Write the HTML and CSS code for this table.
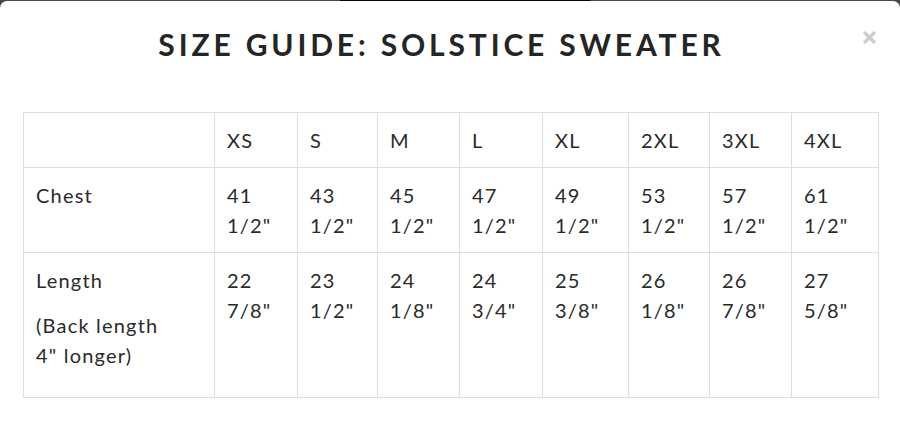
FILE: index.html
```html
<!DOCTYPE html>
<html>
<head>
<meta charset="utf-8">
<link rel="stylesheet" href="styles.css">
</head>
<body>
<div class="modal">
  <div class="modal-head">
    <h1 class="title">SIZE GUIDE: SOLSTICE SWEATER</h1>
    <button class="close" aria-label="Close">
      <svg width="15" height="15" viewBox="0 0 15 15"><path d="M2 2 L13 13 M13 2 L2 13" stroke="#cfcfcf" stroke-width="3.4" stroke-linecap="butt"/></svg>
    </button>
  </div>
  <table class="size-table">
    <colgroup>
      <col class="c-label"><col class="c-xs"><col class="c-s"><col class="c-m"><col class="c-l"><col class="c-xl"><col class="c-2xl"><col class="c-3xl"><col class="c-4xl">
    </colgroup>
    <tr>
      <td></td><td>XS</td><td>S</td><td>M</td><td>L</td><td>XL</td><td>2XL</td><td>3XL</td><td>4XL</td>
    </tr>
    <tr>
      <td>Chest</td>
      <td>41<br>1/2"</td><td>43<br>1/2"</td><td>45<br>1/2"</td><td>47<br>1/2"</td><td>49<br>1/2"</td><td>53<br>1/2"</td><td>57<br>1/2"</td><td>61<br>1/2"</td>
    </tr>
    <tr>
      <td><p class="para">Length</p><p class="para">(Back length<br>4" longer)</p></td>
      <td>22<br>7/8"</td><td>23<br>1/2"</td><td>24<br>1/8"</td><td>24<br>3/4"</td><td>25<br>3/8"</td><td>26<br>1/8"</td><td>26<br>7/8"</td><td>27<br>5/8"</td>
    </tr>
  </table>
</div>
</body>
</html>
```

FILE: styles.css
```css
html, body {
  margin: 0;
  padding: 0;
}
body {
  width: 900px;
  height: 447px;
  overflow: hidden;
  background: linear-gradient(to right, #474747 0, #474747 340px, #050505 340px, #050505 590px, #474747 590px);
  font-family: "Lato", "Liberation Sans", sans-serif;
  color: #2a2a2a;
}
.modal {
  margin-top: 1px;
  height: 452px;
  background: #fff;
  border-radius: 7px;
  padding: 0 22px 0 23px;
  box-sizing: border-box;
}
.modal-head {
  display: flex;
  justify-content: center;
  position: relative;
  padding-top: 25px;
  height: 111px;
  box-sizing: border-box;
}
.title {
  margin: 0 18px 0 0;
  font-size: 30px;
  line-height: 36px;
  font-weight: 700;
  letter-spacing: 3.85px;
  color: #252525;
}
.close {
  position: absolute;
  right: 1px;
  top: 29px;
  border: 0;
  background: none;
  padding: 0;
  width: 15px;
  height: 15px;
}
.close svg { display: block; }
.size-table {
  border-collapse: collapse;
  table-layout: fixed;
  width: 855px;
  font-size: 20px;
  line-height: 30px;
  letter-spacing: 1.2px;
}
.size-table td {
  border: 1px solid #dedede;
  padding: 12px 12px;
  vertical-align: top;
}
.para { margin: 0 0 15px; }
.c-label { width: 191px; }
.c-xs { width: 83px; }
.c-s { width: 80px; }
.c-m { width: 82px; }
.c-l { width: 83px; }
.c-xl { width: 86px; }
.c-2xl { width: 81px; }
.c-3xl { width: 82px; }
.c-4xl { width: 87px; }
```
